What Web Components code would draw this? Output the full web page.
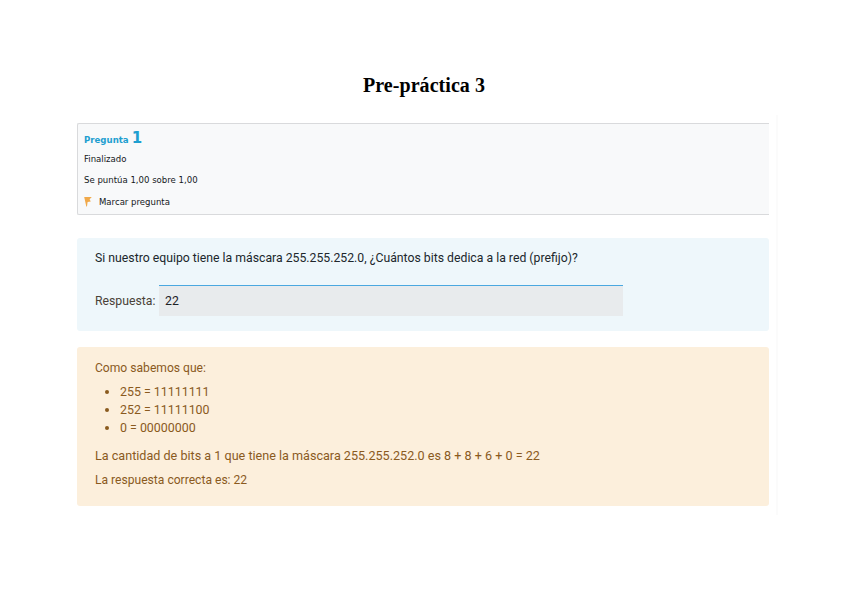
<!DOCTYPE html>
<html lang="es">
<head>
<meta charset="utf-8">
<title>Pre-práctica 3</title>
<style>
    html, body { margin: 0; background: #fff; }
    body { font-family: Roboto, "Noto Sans", sans-serif; }
</style>
</head>
<body>
<quiz-page heading="Pre-práctica 3">
    <question-info number="1" state="Finalizado" grade="Se puntúa 1,00 sobre 1,00" flag="Marcar pregunta"></question-info>
    <question-box prompt="Si nuestro equipo tiene la máscara 255.255.252.0, ¿Cuántos bits dedica a la red (prefijo)?" label="Respuesta:" value="22"></question-box>
    <feedback-box>
        <p>Como sabemos que:</p>
        <ul>
            <li>255 = 11111111</li>
            <li>252 = 11111100</li>
            <li>0 = 00000000</li>
        </ul>
        <p class="long">La cantidad de bits a 1 que tiene la máscara 255.255.252.0 es 8 + 8 + 6 + 0 = 22</p>
        <p>La respuesta correcta es: 22</p>
    </feedback-box>
</quiz-page>
<style>
    /* the long sum line runs a little wider than the rest of the feedback */
    feedback-box .long { font-size: 12.6px; }
    feedback-box li { font-size: 12.4px; }
    feedback-box li::marker { font-size: 12.4px; color: #8a5a1e; }
</style>

<script>
class QuizPage extends HTMLElement {
    constructor() {
        super();
        this.attachShadow({ mode: "open" });
        this.shadowRoot.innerHTML = `
<style>
    :host { display: block; height: 600px; box-sizing: border-box; padding-top: 74px; overflow: hidden; }
    h1 {
        margin: 0 0 26px;
        font: bold 20px/23px "Liberation Serif", serif;
        letter-spacing: 0.05px;
        color: #000;
        text-align: center;
    }
    .sheet {
        margin: -8px 0 0 77px;
        width: 701px;
        box-sizing: border-box;
        padding: 8px 7px 9px 0;
        border-right: 2px solid #fbfbfb;
        display: flex;
        flex-direction: column;
    }
</style>
<h1></h1>
<div class="sheet"><slot></slot></div>`;
    }
    connectedCallback() {
        this.shadowRoot.querySelector("h1").textContent = this.getAttribute("heading");
    }
}

class QuestionInfo extends HTMLElement {
    constructor() {
        super();
        this.attachShadow({ mode: "open" });
        this.shadowRoot.innerHTML = `
<style>
    :host {
        display: block;
        height: 92px;
        box-sizing: border-box;
        background: #f8f9fa;
        border: 1px solid #d9dadc;
        border-right: 0;
        border-radius: 2px 0 0 2px;
        padding: 6px 0 0 6px;
        font-family: "DejaVu Sans", sans-serif;
        font-size: 8.55px;
        color: #14181b;
        margin-bottom: 23px;
    }
    .no { color: #1f9fd0; font-weight: bold; line-height: 17px; height: 18px; display: flex; align-items: baseline; gap: 3px; font-size: 8.6px; }
    .no b { font-size: 15px; }
    .row { height: 21px; line-height: 21px; margin-top: 1px; }
    .state { height: 20px; line-height: 20px; margin-top: 1px; }
    .flag { display: flex; align-items: center; gap: 7px; height: 22px; }
    svg { width: 8px; height: 12px; display: block; }
</style>
<div class="no"><span>Pregunta</span><b></b></div>
<div class="state"></div>
<div class="row grade"></div>
<div class="flag">
    <svg viewBox="0 0 8 12"><path d="M0.2 1 L7.8 1 L5.6 3.2 L6.8 5.4 L3.6 6 L3 10.5 L2.3 10.5 Z" fill="#f0a94b"/></svg>
    <span class="flag-text"></span>
</div>`;
    }
    connectedCallback() {
        const s = this.shadowRoot;
        s.querySelector("b").textContent = this.getAttribute("number");
        s.querySelector(".state").textContent = this.getAttribute("state");
        s.querySelector(".grade").textContent = this.getAttribute("grade");
        s.querySelector(".flag-text").textContent = this.getAttribute("flag");
    }
}

class QuestionBox extends HTMLElement {
    constructor() {
        super();
        this.attachShadow({ mode: "open" });
        this.shadowRoot.innerHTML = `
<style>
    :host {
        display: block;
        height: 93px;
        box-sizing: border-box;
        background: #eef7fb;
        border-radius: 3px;
        padding: 10px 18px 0;
        font-size: 12.25px;
        color: #20272c;
        margin-bottom: 16px;
    }
    .prompt { line-height: 20px; height: 37px; }
    .answer { display: flex; align-items: center; }
    .label { width: 64px; color: #4a4238; }
    .field {
        width: 464px;
        height: 31px;
        box-sizing: border-box;
        background: #e8ebed;
        border-top: 1px solid #4aa8e0;
        line-height: 30px;
        padding-left: 6px;
        color: #1d2125;
    }
</style>
<div class="prompt"></div>
<div class="answer"><span class="label"></span><div class="field"></div></div>`;
    }
    connectedCallback() {
        const s = this.shadowRoot;
        s.querySelector(".prompt").textContent = this.getAttribute("prompt");
        s.querySelector(".label").textContent = this.getAttribute("label");
        s.querySelector(".field").textContent = this.getAttribute("value");
    }
}

class FeedbackBox extends HTMLElement {
    constructor() {
        super();
        this.attachShadow({ mode: "open" });
        this.shadowRoot.innerHTML = `
<style>
    :host {
        display: block;
        height: 159px;
        box-sizing: border-box;
        background: #fcefdc;
        border-radius: 3px;
        padding: 12px 18px 0;
        font-size: 12.1px;
        line-height: 18px;
        color: #8a5a1e;
    }
    ::slotted(p) { margin: 0 0 6px; }
    ::slotted(ul) { margin: 0 0 10px; padding: 0 0 0 25px; }
</style>
<slot></slot>`;
    }
}

customElements.define("quiz-page", QuizPage);
customElements.define("question-info", QuestionInfo);
customElements.define("question-box", QuestionBox);
customElements.define("feedback-box", FeedbackBox);
</script>
</body>
</html>
